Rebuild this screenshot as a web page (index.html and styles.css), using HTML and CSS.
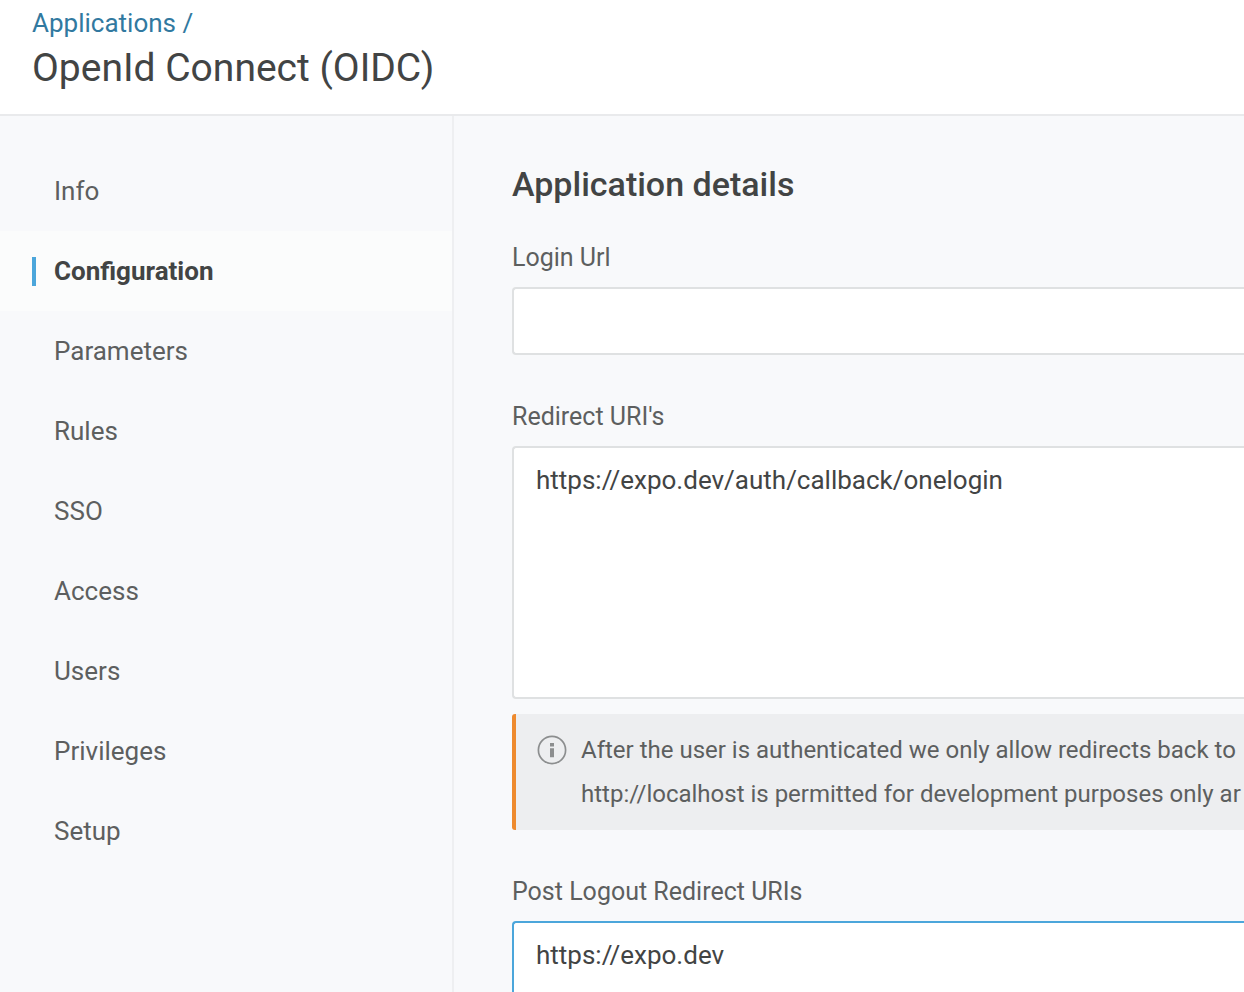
FILE: index.html
```html
<!DOCTYPE html>
<html lang="en">
<head>
<meta charset="utf-8">
<title>OpenId Connect (OIDC)</title>
<link rel="stylesheet" href="styles.css">
</head>
<body>
<header class="page-header">
  <nav class="breadcrumb" aria-label="Breadcrumb"><a href="#">Applications /</a></nav>
  <h1 class="page-title">OpenId Connect (OIDC)</h1>
</header>
<div class="layout">
  <nav class="sidebar" aria-label="Application settings">
    <a class="nav-item" href="#">Info</a>
    <a class="nav-item active" href="#" aria-current="page">Configuration</a>
    <a class="nav-item" href="#">Parameters</a>
    <a class="nav-item" href="#">Rules</a>
    <a class="nav-item" href="#">SSO</a>
    <a class="nav-item" href="#">Access</a>
    <a class="nav-item" href="#">Users</a>
    <a class="nav-item" href="#">Privileges</a>
    <a class="nav-item" href="#">Setup</a>
  </nav>
  <main class="content">
    <h2 class="section-title">Application details</h2>
    <div class="field">
      <label class="label" for="login-url">Login Url</label>
      <input class="control" id="login-url" type="text">
    </div>
    <div class="field">
      <label class="label" for="redirect-uris">Redirect URI's</label>
      <textarea class="control area" id="redirect-uris" spellcheck="false">https://expo.dev/auth/callback/onelogin</textarea>
      <div class="notice">
        <svg class="notice-icon" viewBox="0 0 30 30" aria-hidden="true">
          <circle cx="15" cy="15" r="13.6" fill="none" stroke="currentColor" stroke-width="1.7"/>
          <path d="M13 8h4v3.4h-4zM13 13.2h4v9h-4z" fill="currentColor"/>
        </svg>
        <p class="notice-text">After the user is authenticated we only allow redirects back to<br>http://localhost is permitted for development purposes only ar</p>
      </div>
    </div>
    <div class="field">
      <label class="label" for="logout-uris">Post Logout Redirect URIs</label>
      <textarea class="control area focused" id="logout-uris" spellcheck="false">https://expo.dev</textarea>
    </div>
  </main>
</div>
</body>
</html>
```
FILE: styles.css
```css
* {
  box-sizing: border-box;
}

body {
  margin: 0;
  height: 100vh;
  overflow: hidden;
  display: flex;
  flex-direction: column;
  background: #f8f9fb;
  color: #424444;
  font-family: Roboto, "Liberation Sans", sans-serif;
  font-size: 26px;
}

.page-header {
  flex: none;
  padding: 7px 32px 16px;
  background: #fff;
  border-bottom: 2px solid #e9eaec;
}

.breadcrumb {
  line-height: 32px;
}

.breadcrumb a {
  color: #3179a0;
  text-decoration: none;
}

.page-title {
  margin: 0;
  font-size: 39px;
  font-weight: 400;
  line-height: 59px;
}

.layout {
  flex: 1;
  min-height: 0;
  display: grid;
  grid-template-columns: 454px minmax(0, 1fr);
}

.sidebar {
  padding-top: 35px;
  border-right: 2px solid #eeeff1;
}

.nav-item {
  display: flex;
  align-items: center;
  height: 80px;
  padding-left: 54px;
  color: #5d5f5f;
  text-decoration: none;
}

.nav-item.active {
  padding-left: 32px;
  background: #fbfcfc;
  color: #424444;
  font-weight: 700;
}

.nav-item.active::before {
  content: "";
  width: 4px;
  height: 29px;
  margin-right: 18px;
  background: #4ba6db;
}

.content {
  padding: 48px 0 0 58px;
}

.section-title {
  margin: 0 0 37px;
  font-size: 34px;
  font-weight: 500;
  line-height: 40px;
}

.field {
  margin-bottom: 45px;
}

.label {
  display: block;
  margin-bottom: 12px;
  color: #5d5f5f;
  font-size: 25px;
  line-height: 34px;
}

.control {
  display: block;
  width: 100%;
  height: 68px;
  padding: 16px 22px;
  border: 2px solid #dfe1e2;
  border-right: 0;
  border-radius: 4px 0 0 4px;
  outline: 0;
  background: #fff;
  color: #424444;
  font: inherit;
  line-height: 32px;
}

.area {
  height: 253px;
  resize: none;
}

.focused {
  border-color: #4ba6db;
}

.notice {
  display: flex;
  gap: 14px;
  margin-top: 15px;
  padding: 14px 0 14px 21px;
  overflow: hidden;
  border-left: 4px solid #ee8a2e;
  border-radius: 3px 0 0 3px;
  background: #edeef0;
  color: #5d5f5f;
}

.notice-icon {
  flex: none;
  width: 30px;
  height: 30px;
  margin-top: 7px;
  color: #8c8e8f;
}

.notice-text {
  margin: 0;
  font-size: 24px;
  line-height: 44px;
  white-space: nowrap;
}
```
